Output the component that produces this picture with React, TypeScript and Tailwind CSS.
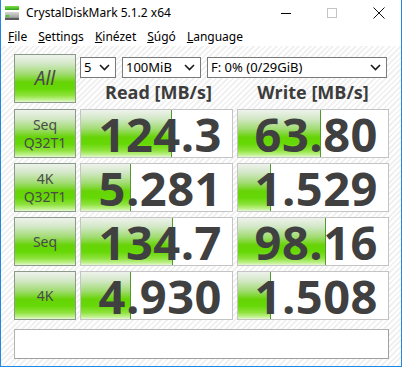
import React from "react";

const greenGrad =
  "bg-[linear-gradient(to_bottom,#eef2ec_0%,#d4e8c8_18%,#a2dc74_40%,#66d406_58%,#66d806_72%,#8ee23c_86%,#c4f294_96%,#e4f8d4_100%)]";

function Label({ lines }: { lines: string[] }) {
  return (
    <div
      className={`h-[49px] border border-[#8c9a8c] ${greenGrad} flex flex-col items-center justify-center text-[14px] leading-[18px] text-[#4a4a4a]`}
      style={{ fontFamily: '"Noto Sans", "Open Sans", sans-serif' }}
    >
      {lines.map((l) => (
        <span key={l}>{l}</span>
      ))}
    </div>
  );
}

function Value({ v, bar }: { v: string; bar: number }) {
  return (
    <div className="relative h-[49px] border border-[#c4c4c4] bg-white">
      <div
        className={`absolute left-0 top-0 bottom-0 ${greenGrad} border-r border-[#4f9a2a]`}
        style={{ width: bar }}
      />
      <div
        className="relative h-full flex items-center justify-end pr-[10px] text-[47px] font-bold text-[#404040] leading-[40px] tracking-[0.5px]"
        style={{ fontFamily: '"Open Sans", "Noto Sans", sans-serif' }}
      >
        {v}
      </div>
    </div>
  );
}

function Select({ w, text }: { w: number; text: string }) {
  return (
    <div
      className="h-[21px] border border-[#7a7a7a] bg-white flex items-center justify-between pl-[3px] pr-[5px] text-[13px] text-black"
      style={{ width: w, fontFamily: '"Noto Sans", "Open Sans", sans-serif' }}
    >
      <span className="leading-none">{text}</span>
      <svg width="11" height="7" viewBox="0 0 11 7">
        <path d="M1 1 L5.5 5.5 L10 1" fill="none" stroke="#1a1a1a" strokeWidth="1.6" />
      </svg>
    </div>
  );
}

function AppIcon() {
  return (
    <svg width="16" height="16" viewBox="0 0 16 16">
      <defs>
        <linearGradient id="g1" x1="0" y1="0" x2="0" y2="1">
          <stop offset="0" stopColor="#7de04a" />
          <stop offset="1" stopColor="#2fa214" />
        </linearGradient>
        <linearGradient id="g2" x1="0" y1="0" x2="0" y2="1">
          <stop offset="0" stopColor="#d8d8d8" />
          <stop offset="0.6" stopColor="#a8a8a8" />
          <stop offset="1" stopColor="#606060" />
        </linearGradient>
      </defs>
      <rect x="1" y="1" width="14" height="4" fill="url(#g1)" />
      <rect x="1" y="7" width="14" height="8" fill="url(#g2)" />
      <rect x="1" y="13" width="14" height="2" fill="#5a5a5a" />
      <rect x="2" y="10" width="3" height="2" fill="#3fd020" />
    </svg>
  );
}

const rows = [
  { label: ["Seq", "Q32T1"], r: "124.3", rb: 91, w: "63.80", wb: 83 },
  { label: ["4K", "Q32T1"], r: "5.281", rb: 50, w: "1.529", wb: 33 },
  { label: ["Seq"], r: "134.7", rb: 92, w: "98.16", wb: 88 },
  { label: ["4K"], r: "4.930", rb: 50, w: "1.508", wb: 33 },
];

export default function App() {
  const ui = { fontFamily: '"Noto Sans", "Open Sans", sans-serif' };
  return (
    <div
      className="w-[402px] h-[367px] flex flex-col border-x border-b border-[#1c8ae4] bg-white overflow-hidden"
      style={ui}
    >
      {/* Title bar */}
      <div className="h-[28px] flex items-center bg-white">
        <div className="ml-[3px] mt-[-2px]">
          <AppIcon />
        </div>
        <span className="ml-[6px] text-[12px] text-black mt-[-2px]">CrystalDiskMark 5.1.2 x64</span>
        <div className="ml-auto flex items-center h-full">
          <div className="w-[46px] h-full flex items-center justify-center">
            <div className="w-[10px] h-px bg-black mt-[-2px]" />
          </div>
          <div className="w-[46px] h-full flex items-center justify-center">
            <div className="w-[10px] h-[10px] border border-[#c4c4c4] mt-[-2px]" />
          </div>
          <div className="w-[46px] h-full flex items-center justify-center">
            <svg width="12" height="12" viewBox="0 0 12 12" className="mt-[-2px] ml-[2px]">
              <path d="M0.5 0.5 L11.5 11.5 M11.5 0.5 L0.5 11.5" stroke="#111" strokeWidth="1" />
            </svg>
          </div>
        </div>
      </div>
      {/* Menu bar */}
      <div className="h-[18px] flex items-center pl-[7px] gap-[11px] text-[12px] text-black bg-white">
        <span><u>F</u>ile</span>
        <span><u>S</u>ettings</span>
        <span><u>K</u>inézet</span>
        <span><u>S</u>úgó</span>
        <span><u>L</u>anguage</span>
      </div>
      {/* Content */}
      <div className="flex-1 bg-[repeating-linear-gradient(135deg,#ffffff_0px,#ffffff_2px,#f1f1f1_2px,#f1f1f1_4px)] pl-[13px] pt-[8px]">
        <div className="grid grid-cols-[62px_153px_152px] gap-x-[4px] gap-y-[5px]">
          <div
            className={`h-[49px] border border-[#8c9a8c] ${greenGrad} flex items-center justify-center text-[19px] text-[#4a4a4a] italic`}
          >
            All
          </div>
          <div className="col-span-2 flex flex-col">
            <div className="flex gap-[6px] mt-[3px]">
              <Select w={36} text="5" />
              <Select w={79} text="100MiB" />
              <Select w={180} text="F: 0% (0/29GiB)" />
            </div>
            <div
              className="flex text-[18px] font-bold text-[#3c3c3c] mt-[2px] leading-[24px]"
              style={{ fontFamily: '"Open Sans", "Noto Sans", sans-serif' }}
            >
              <div className="w-[157px] text-center">Read [MB/s]</div>
              <div className="w-[152px] text-center">Write [MB/s]</div>
            </div>
          </div>
          {rows.map((r) => (
            <React.Fragment key={r.r}>
              <Label lines={r.label} />
              <Value v={r.r} bar={r.rb} />
              <Value v={r.w} bar={r.wb} />
            </React.Fragment>
          ))}
        </div>
        <div className="mt-[9px] w-[375px] h-[30px] border border-[#b4b4b4] border-r-[#a0a0a0] border-b-[#a0a0a0] bg-white" />
      </div>
    </div>
  );
}
